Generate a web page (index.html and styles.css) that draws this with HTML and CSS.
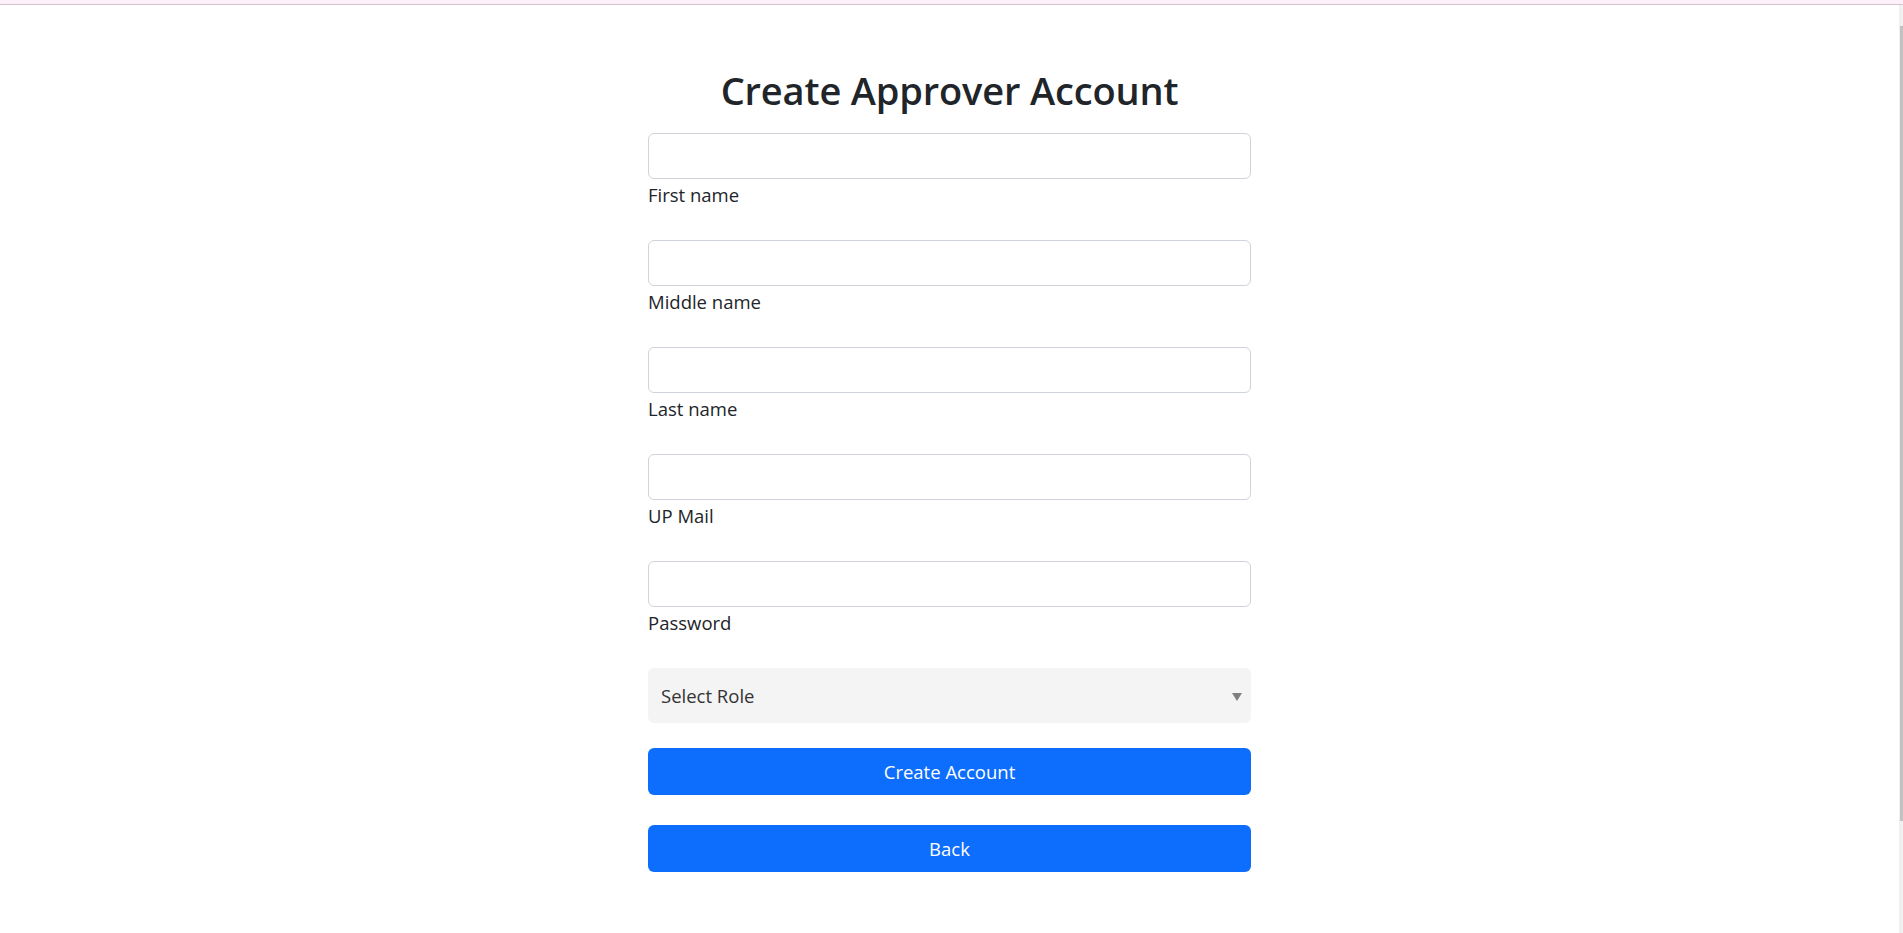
FILE: index.html
```html
<!DOCTYPE html>
<html lang="en">
<head>
<meta charset="utf-8">
<title>Create Approver Account</title>
<link rel="stylesheet" href="styles.css">
</head>
<body>
<div class="topbar"></div>
<div class="viewport">
  <main class="page">
    <div class="container">
      <h1 class="title">Create Approver Account</h1>
      <form class="form">
        <div class="field">
          <input class="control" type="text" id="first">
          <label class="label" for="first">First name</label>
        </div>
        <div class="field">
          <input class="control" type="text" id="middle">
          <label class="label" for="middle">Middle name</label>
        </div>
        <div class="field">
          <input class="control" type="text" id="last">
          <label class="label" for="last">Last name</label>
        </div>
        <div class="field">
          <input class="control" type="email" id="mail">
          <label class="label" for="mail">UP Mail</label>
        </div>
        <div class="field">
          <input class="control" type="password" id="password">
          <label class="label" for="password">Password</label>
        </div>
        <div class="select-wrap">
          <select class="select">
            <option>Select Role</option>
          </select>
        </div>
        <button class="btn btn-create" type="button">Create Account</button>
        <button class="btn btn-back" type="button">Back</button>
      </form>
    </div>
  </main>
  <div class="scrollbar"><div class="thumb"></div></div>
</div>
</body>
</html>
```

FILE: styles.css
```css
html, body {
  margin: 0;
  padding: 0;
  height: 100%;
  overflow: hidden;
}

body {
  display: flex;
  flex-direction: column;
  font-family: "Open Sans", "Noto Sans", "Liberation Sans", sans-serif;
  color: #212529;
  background: #ffffff;
}

.topbar {
  height: 4px;
  flex: none;
  background: #fdf0f8;
  border-bottom: 1px solid #d4c4d0;
}

.viewport {
  flex: 1;
  display: flex;
  min-height: 0;
}

.page {
  flex: 1;
  background: #ffffff;
}

.scrollbar {
  width: 4px;
  flex: none;
  background: #f0f0f0;
  padding-top: 21px;
  box-sizing: border-box;
  display: flex;
  justify-content: flex-end;
}

.thumb {
  width: 3px;
  height: 795px;
  background: #c1c1c1;
}

.container {
  width: 603px;
  margin: 0 auto;
  padding-top: 61px;
}

.title {
  margin: 0 0 19px;
  font-size: 38px;
  line-height: 48px;
  font-weight: 600;
  text-align: center;
  color: #212529;
  letter-spacing: -0.15px;
}

.form {
  display: flex;
  flex-direction: column;
}

.field {
  display: flex;
  flex-direction: column;
  margin-bottom: 30px;
}

.control {
  box-sizing: border-box;
  height: 46px;
  width: 100%;
  border: 1px solid #ced4da;
  border-radius: 6px;
  background: #ffffff;
  padding: 0 16px;
  font: inherit;
  font-size: 20px;
}

.label {
  font-size: 18.5px;
  line-height: 30px;
  padding-top: 1px;
  color: #212529;
}

.select-wrap {
  position: relative;
  margin-bottom: 25px;
}

.select-wrap::after {
  content: "";
  position: absolute;
  right: 9px;
  top: 25px;
  border-left: 5px solid transparent;
  border-right: 5px solid transparent;
  border-top: 8px solid #808080;
  pointer-events: none;
}

.select {
  -webkit-appearance: none;
  appearance: none;
  box-sizing: border-box;
  width: 100%;
  height: 55px;
  border: none;
  border-radius: 6px;
  background: #f4f4f4;
  padding: 0 13px;
  font-family: inherit;
  font-size: 18.5px;
  color: #333333;
}

.btn {
  box-sizing: border-box;
  height: 47px;
  width: 100%;
  border: none;
  border-radius: 6px;
  background: #0d6efd;
  color: #ffffff;
  font-family: inherit;
  font-size: 18.5px;
  cursor: pointer;
}

.btn-create {
  margin-bottom: 30px;
}
```
